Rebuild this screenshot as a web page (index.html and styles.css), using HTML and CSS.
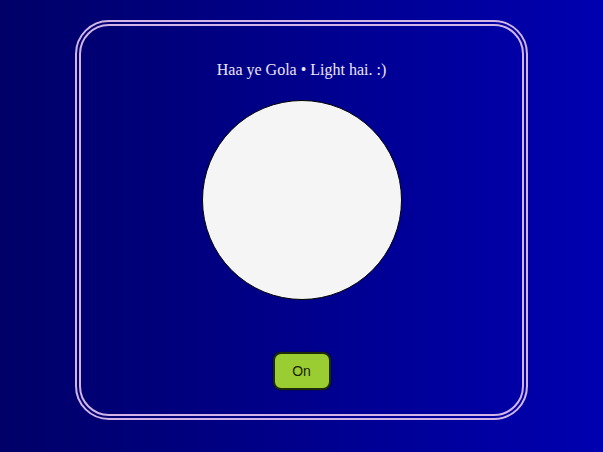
FILE: index.html
```
<!DOCTYPE html>
<html>
<head>
<meta charset="utf-8">
<link rel="stylesheet" href="styles.css">
</head>
<body>
<div class="card">
  <h1 class="title">Haa ye Gola • Light hai. :)</h1>
  <div class="bulb"></div>
  <button class="toggle">On</button>
</div>
</body>
</html>
```
FILE: styles.css
```
html, body {
  margin: 0;
  padding: 0;
  height: 100%;
}
body {
  background: linear-gradient(to right, #000068, #0000b0);
  font-family: "Liberation Serif", serif;
  overflow: hidden;
}
.card {
  box-sizing: border-box;
  width: 453px;
  height: 400px;
  margin: 20px auto 0;
  border: 6px double #d2b4e6;
  border-radius: 34px;
  padding: 35px 0 0;
  display: flex;
  flex-direction: column;
  align-items: center;
}
.title {
  margin: 0;
  font-size: 16px;
  font-weight: normal;
  line-height: 18px;
  color: #ece6f6;
}
.bulb {
  box-sizing: border-box;
  width: 200px;
  height: 200px;
  margin-top: 21px;
  border-radius: 50%;
  background: #f5f5f5;
  border: 1px solid #000;
}
.toggle {
  box-sizing: border-box;
  margin-top: 52px;
  width: 58px;
  height: 38px;
  background: #9acd32;
  border: 2px solid #1c2a08;
  border-radius: 8px;
  box-shadow: 0 0 2px rgba(0,0,0,0.6);
  font-family: "Liberation Sans", Arial, sans-serif;
  font-size: 14px;
  color: #1a2200;
  padding: 0;
}
```
